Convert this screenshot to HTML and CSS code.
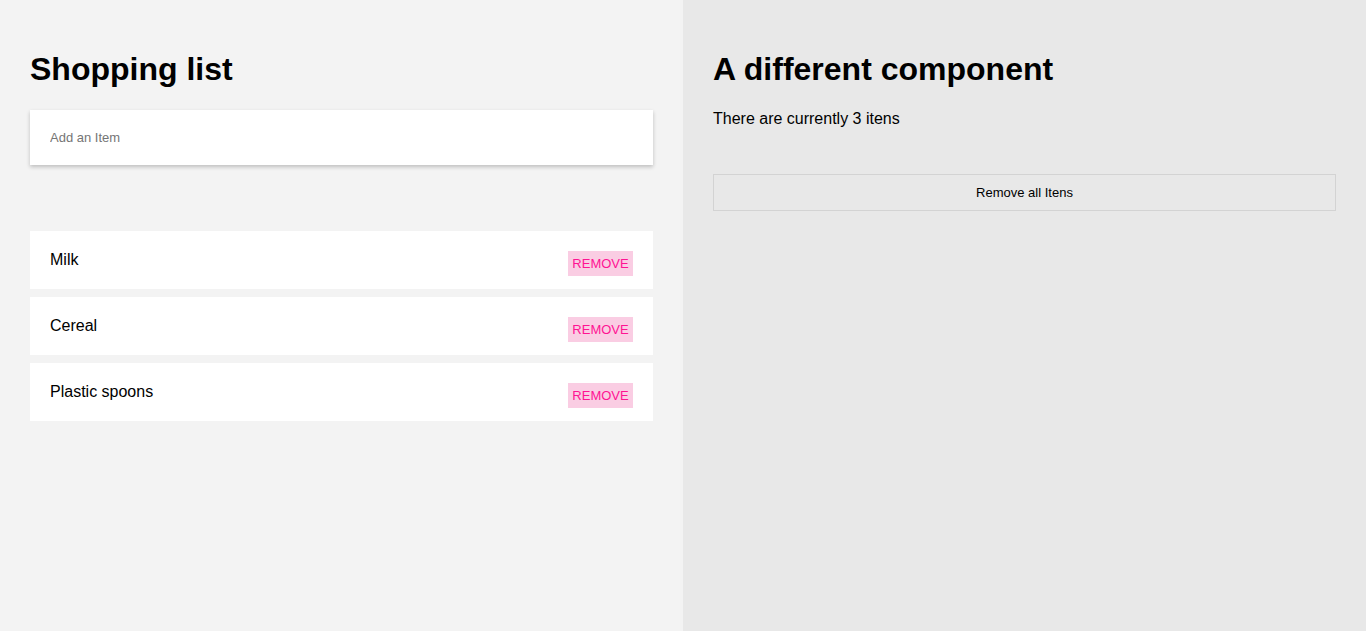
FILE: index.html
```html
<!DOCTYPE html>
<html lang="en">
<head>
<meta charset="utf-8">
<title>Shopping list</title>
<link rel="stylesheet" href="styles.css">
</head>
<body>
<div class="app">
  <section class="panel panel-left">
    <h1 class="title">Shopping list</h1>
    <input class="add-input" type="text" placeholder="Add an Item">
    <ul class="items">
      <li class="item"><span class="item-name">Milk</span><button class="remove-btn">REMOVE</button></li>
      <li class="item"><span class="item-name">Cereal</span><button class="remove-btn">REMOVE</button></li>
      <li class="item"><span class="item-name">Plastic spoons</span><button class="remove-btn">REMOVE</button></li>
    </ul>
  </section>
  <section class="panel panel-right">
    <h1 class="title">A different component</h1>
    <p class="count">There are currently 3 itens</p>
    <button class="remove-all">Remove all Itens</button>
  </section>
</div>
</body>
</html>
```
FILE: styles.css
```css
html, body {
  margin: 0;
  padding: 0;
}
body {
  font-family: "Liberation Sans", Arial, sans-serif;
  color: #000;
}
.app {
  display: grid;
  grid-template-columns: 683px 1fr;
  min-height: 100vh;
}
.panel {
  padding: 30px;
  display: flex;
  flex-direction: column;
  align-items: stretch;
}
.panel-left {
  background: #f3f3f3;
}
.panel-right {
  background: #e8e8e8;
}
.title {
  font-size: 32px;
  font-weight: bold;
  line-height: 37px;
  margin: 21px 0 22px;
}
.add-input {
  box-sizing: border-box;
  height: 55px;
  width: 100%;
  border: none;
  outline: none;
  background: #fff;
  padding: 0 20px;
  font-family: "Liberation Sans", Arial, sans-serif;
  font-size: 13px;
  box-shadow: 0 2px 4px rgba(0, 0, 0, 0.22);
  margin: 0;
}
.add-input::placeholder {
  color: #757575;
}
.items {
  list-style: none;
  margin: 66px 0 0;
  padding: 0;
  display: flex;
  flex-direction: column;
  gap: 8px;
}
.item {
  background: #fff;
  padding: 20px;
  height: 18px;
  display: flex;
  justify-content: space-between;
  align-items: flex-start;
  font-size: 16px;
  line-height: 18px;
}
.remove-btn {
  height: 25px;
  width: 65px;
  padding: 0;
  border: none;
  background: #facde3;
  color: #ff1493;
  font-family: "Liberation Sans", Arial, sans-serif;
  font-size: 13px;
  line-height: 25px;
  text-align: center;
  flex-shrink: 0;
}
.count {
  margin: 0;
  font-size: 16px;
  line-height: 18px;
}
.remove-all {
  margin-top: 46px;
  height: 37px;
  width: 100%;
  border: 1px solid #d3d3d3;
  background: #e8e8e8;
  color: #000;
  font-family: "Liberation Sans", Arial, sans-serif;
  font-size: 13px;
}
```
